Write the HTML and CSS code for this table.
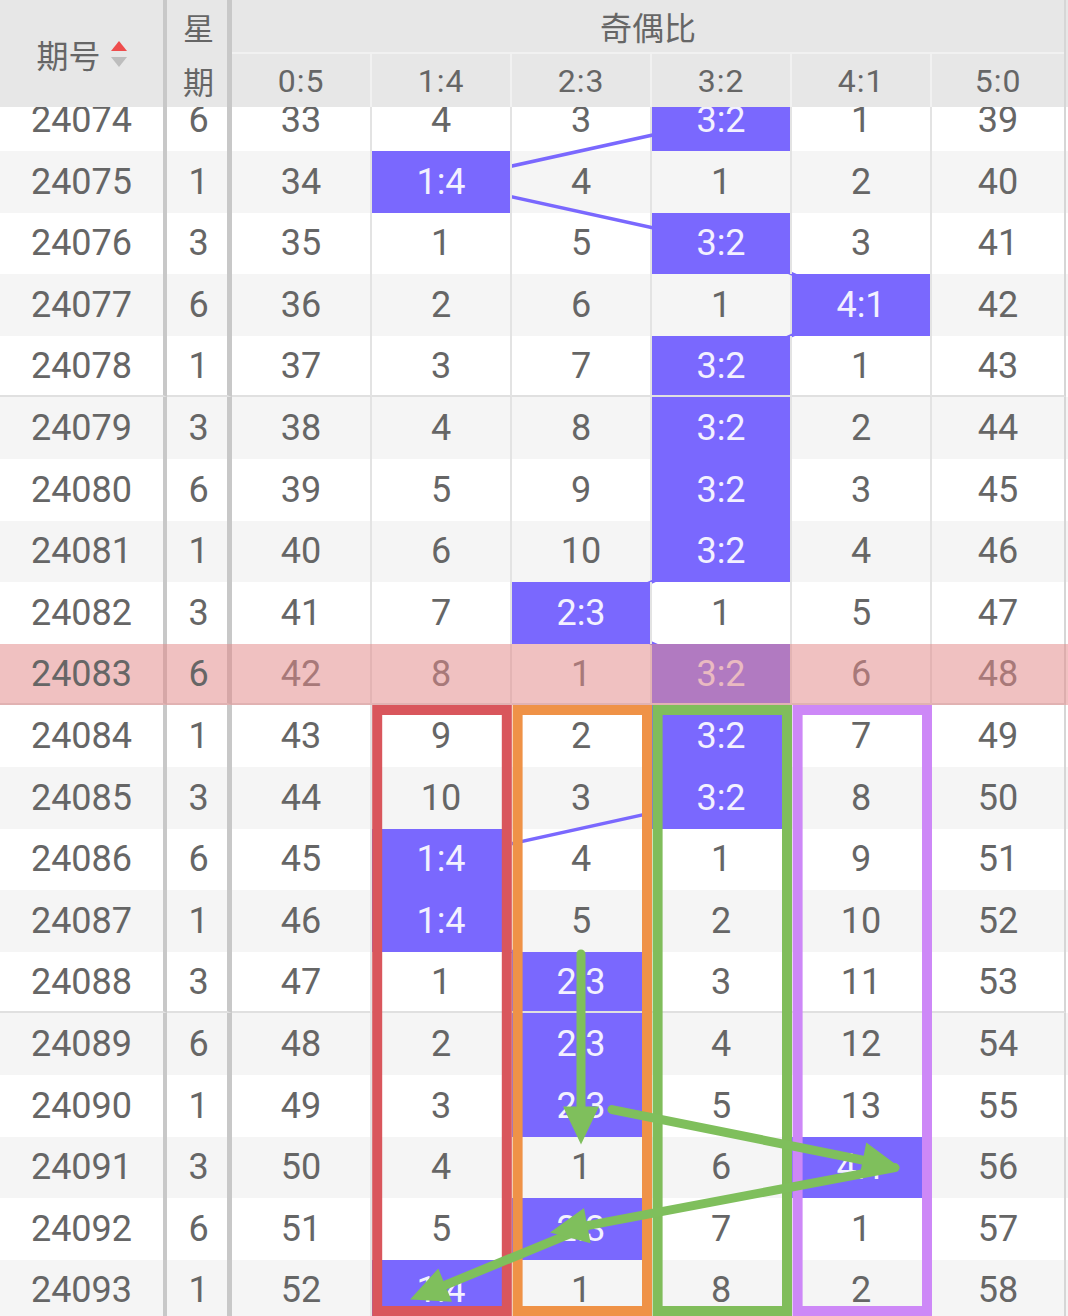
FILE: index.html
```html
<!DOCTYPE html>
<html lang="zh">
<head>
<meta charset="utf-8">
<title>奇偶比走势</title>
<link rel="stylesheet" href="styles.css">
</head>
<body>
<div class="table">
  <div class="thead">
    <div class="th-qh"><span>期号</span>
      <svg class="sort" width="16" height="26" viewBox="0 0 16 26"><path d="M8 0 L16 10 L0 10 Z" fill="#ee4d4d"/><path d="M0 16 L16 16 L8 26 Z" fill="#bdbdbd"/></svg>
    </div>
    <div class="th-wk"><span>星</span><span>期</span></div>
    <div class="th-group">
      <div class="th-title">奇偶比</div>
      <div class="th-sub">
        <div class="h">0:5</div><div class="h">1:4</div><div class="h">2:3</div><div class="h">3:2</div><div class="h">4:1</div><div class="h">5:0</div>
      </div>
    </div>
  </div>
  <div class="tbody">
    <div class="row"><div class="c c-qh">24074</div><div class="c c-wk">6</div><div class="c">33</div><div class="c">4</div><div class="c">3</div><div class="c on">3:2</div><div class="c">1</div><div class="c c-last">39</div></div>
    <div class="row"><div class="c c-qh">24075</div><div class="c c-wk">1</div><div class="c">34</div><div class="c on">1:4</div><div class="c">4</div><div class="c">1</div><div class="c">2</div><div class="c c-last">40</div></div>
    <div class="row"><div class="c c-qh">24076</div><div class="c c-wk">3</div><div class="c">35</div><div class="c">1</div><div class="c">5</div><div class="c on">3:2</div><div class="c">3</div><div class="c c-last">41</div></div>
    <div class="row"><div class="c c-qh">24077</div><div class="c c-wk">6</div><div class="c">36</div><div class="c">2</div><div class="c">6</div><div class="c">1</div><div class="c on">4:1</div><div class="c c-last">42</div></div>
    <div class="row sep"><div class="c c-qh">24078</div><div class="c c-wk">1</div><div class="c">37</div><div class="c">3</div><div class="c">7</div><div class="c on">3:2</div><div class="c">1</div><div class="c c-last">43</div></div>
    <div class="row"><div class="c c-qh">24079</div><div class="c c-wk">3</div><div class="c">38</div><div class="c">4</div><div class="c">8</div><div class="c on">3:2</div><div class="c">2</div><div class="c c-last">44</div></div>
    <div class="row"><div class="c c-qh">24080</div><div class="c c-wk">6</div><div class="c">39</div><div class="c">5</div><div class="c">9</div><div class="c on">3:2</div><div class="c">3</div><div class="c c-last">45</div></div>
    <div class="row"><div class="c c-qh">24081</div><div class="c c-wk">1</div><div class="c">40</div><div class="c">6</div><div class="c">10</div><div class="c on">3:2</div><div class="c">4</div><div class="c c-last">46</div></div>
    <div class="row"><div class="c c-qh">24082</div><div class="c c-wk">3</div><div class="c">41</div><div class="c">7</div><div class="c on">2:3</div><div class="c">1</div><div class="c">5</div><div class="c c-last">47</div></div>
    <div class="row sep pink"><div class="c c-qh"><span class="ab">24083</span></div><div class="c c-wk"><span class="ab">6</span></div><div class="c">42</div><div class="c">8</div><div class="c">1</div><div class="c on">3:2</div><div class="c">6</div><div class="c c-last">48</div><div class="pink-ov"></div></div>
    <div class="row"><div class="c c-qh">24084</div><div class="c c-wk">1</div><div class="c">43</div><div class="c">9</div><div class="c">2</div><div class="c on">3:2</div><div class="c">7</div><div class="c c-last">49</div></div>
    <div class="row"><div class="c c-qh">24085</div><div class="c c-wk">3</div><div class="c">44</div><div class="c">10</div><div class="c">3</div><div class="c on">3:2</div><div class="c">8</div><div class="c c-last">50</div></div>
    <div class="row"><div class="c c-qh">24086</div><div class="c c-wk">6</div><div class="c">45</div><div class="c on">1:4</div><div class="c">4</div><div class="c">1</div><div class="c">9</div><div class="c c-last">51</div></div>
    <div class="row"><div class="c c-qh">24087</div><div class="c c-wk">1</div><div class="c">46</div><div class="c on">1:4</div><div class="c">5</div><div class="c">2</div><div class="c">10</div><div class="c c-last">52</div></div>
    <div class="row sep"><div class="c c-qh">24088</div><div class="c c-wk">3</div><div class="c">47</div><div class="c">1</div><div class="c on">2:3</div><div class="c">3</div><div class="c">11</div><div class="c c-last">53</div></div>
    <div class="row"><div class="c c-qh">24089</div><div class="c c-wk">6</div><div class="c">48</div><div class="c">2</div><div class="c on">2:3</div><div class="c">4</div><div class="c">12</div><div class="c c-last">54</div></div>
    <div class="row"><div class="c c-qh">24090</div><div class="c c-wk">1</div><div class="c">49</div><div class="c">3</div><div class="c on">2:3</div><div class="c">5</div><div class="c">13</div><div class="c c-last">55</div></div>
    <div class="row"><div class="c c-qh">24091</div><div class="c c-wk">3</div><div class="c">50</div><div class="c">4</div><div class="c">1</div><div class="c">6</div><div class="c on">4:1</div><div class="c c-last">56</div></div>
    <div class="row"><div class="c c-qh">24092</div><div class="c c-wk">6</div><div class="c">51</div><div class="c">5</div><div class="c on">2:3</div><div class="c">7</div><div class="c">1</div><div class="c c-last">57</div></div>
    <div class="row"><div class="c c-qh">24093</div><div class="c c-wk">1</div><div class="c">52</div><div class="c on">1:4</div><div class="c">1</div><div class="c">8</div><div class="c">2</div><div class="c c-last">58</div></div>

    <svg class="links" width="1068" height="1232" viewBox="0 0 1068 1232">
      <polyline fill="none" stroke="#7a68fe" stroke-width="3.5" stroke-linejoin="round"
        points="722,30.8 442,92.4 722,154 862,215.6 722,277.2 722,338.8 722,400.4 722,462 582,523.6 722,585.2 722,646.8 722,708.4 442,770 442,831.6 582,893.2 582,954.8 582,1016.4"/>
    </svg>

    <svg class="marks" width="1068" height="1232" viewBox="0 0 1068 1232">
      <g fill="none" stroke-width="10">
        <rect x="377.2" y="621" width="129.6" height="601" stroke="#d9565c"/>
        <rect x="517.6" y="621" width="129.4" height="601" stroke="#ef9247"/>
        <rect x="657.6" y="621" width="129.4" height="601" stroke="#80bd5b"/>
        <rect x="797.6" y="621" width="129.4" height="601" stroke="#cd88f7"/>
      </g>
      <g stroke="#7fbf5c" stroke-width="9" stroke-linecap="round" fill="none">
        <line x1="581" y1="865" x2="581" y2="1017.6"/>
        <line x1="612" y1="1020.6" x2="862.75" y2="1071.1"/>
        <line x1="895" y1="1078.6" x2="587.3" y2="1136.6"/>
        <line x1="585" y1="1138.6" x2="445.2" y2="1196.1"/>
      </g>
      <g fill="#7fbf5c">
        <polygon points="581,1055.6 563,1017.6 599,1017.6"/>
        <polygon points="900,1078.6 859.2,1088.7 866.3,1053.5"/>
        <polygon points="550,1143.6 584,1118.9 590.6,1154.3"/>
        <polygon points="410,1210.6 438.3,1179.5 452,1212.8"/>
      </g>
    </svg>
  </div>
</div>
</body>
</html>
```

FILE: styles.css
```css
html, body {
  margin: 0;
  padding: 0;
  overflow: hidden;
  background: #fff;
}

.table {
  width: 1068px;
  height: 1316px;
  overflow: hidden;
  font-family: Roboto, "Noto Sans CJK SC", sans-serif;
  color: #666;
}

/* ---------- header ---------- */
.thead {
  display: flex;
  height: 107px;
  background: #e7e7e7;
  position: relative;
  z-index: 10;
}

.th-qh {
  width: 167px;
  box-sizing: border-box;
  border-right: 4px solid #c8c8c8;
  display: flex;
  align-items: center;
  justify-content: center;
  gap: 10px;
  font-size: 32px;
}

.sort {
  display: block;
}

.th-wk {
  width: 65px;
  box-sizing: border-box;
  border-right: 5px solid #c8c8c8;
  display: flex;
  flex-direction: column;
  font-size: 31px;
  padding-left: 3px;
}

.th-wk span {
  flex: 1;
  display: flex;
  align-items: center;
  justify-content: center;
}

.th-group {
  width: 834px;
  box-sizing: border-box;
  border-right: 2px solid #d6d6d6;
  display: flex;
  flex-direction: column;
}

.th-title {
  height: 54px;
  box-sizing: border-box;
  border-bottom: 2px solid #f1f1f1;
  display: flex;
  align-items: center;
  justify-content: center;
  font-size: 32px;
}

.th-sub {
  display: flex;
  flex: 1;
}

.th-sub .h {
  width: 140px;
  box-sizing: border-box;
  border-right: 2px solid #f1f1f1;
  display: flex;
  align-items: center;
  justify-content: center;
  font-size: 32px;
  letter-spacing: 1px;
}

.th-sub .h:last-child {
  width: 132px;
  border-right: none;
}

/* ---------- body ---------- */
.tbody {
  position: relative;
  margin-top: -17.6px;
}

.row {
  display: flex;
  height: 61.6px;
  background: #fff;
}

.row:nth-child(even) {
  background: #f5f5f5;
}

.c {
  box-sizing: border-box;
  width: 140px;
  border-right: 2px solid #e3e3e3;
  display: flex;
  align-items: center;
  justify-content: center;
  font-size: 36px;
}

.c-qh {
  width: 167px;
  border-right: 4px solid #c8c8c8;
}

.c-wk {
  width: 65px;
  border-right: 5px solid #c8c8c8;
  padding-left: 3px;
}

.c-last {
  width: 134px;
  border-right-color: #d6d6d6;
}

.sep .c {
  border-bottom: 2px solid #e0e0e0;
}

.on {
  background: #7a68fe;
  color: #f3f1ff;
  position: relative;
  z-index: 2;
}

.row.pink {
  position: relative;
  background: #fff;
}

.pink-ov {
  position: absolute;
  left: 0;
  top: 0;
  right: 0;
  bottom: 0;
  background: rgba(227, 137, 137, 0.53);
  z-index: 3;
}

.ab {
  position: relative;
  z-index: 4;
}

.links {
  position: absolute;
  left: 0;
  top: 0;
  z-index: 1;
  pointer-events: none;
}

.marks {
  position: absolute;
  left: 0;
  top: 0;
  z-index: 5;
  pointer-events: none;
}
```
